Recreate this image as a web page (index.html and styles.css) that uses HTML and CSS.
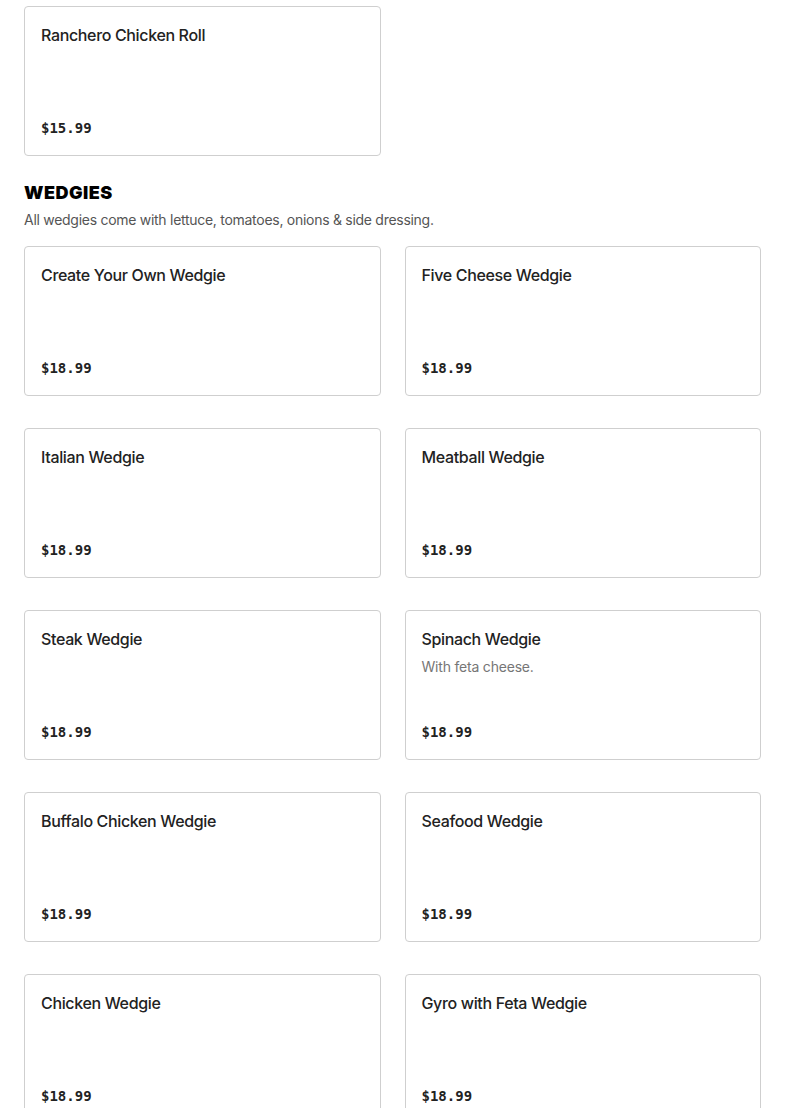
FILE: index.html
```html
<!DOCTYPE html>
<html lang="en">
<head>
<meta charset="utf-8">
<title>Menu</title>
<link rel="stylesheet" href="styles.css">
</head>
<body>
<main class="menu">
  <section class="category">
    <div class="grid">
      <article class="card">
        <h3 class="item-name">Ranchero Chicken Roll</h3>
        <div class="price">$15.99</div>
      </article>
    </div>
  </section>

  <section class="category">
    <h2 class="cat-title">WEDGIES</h2>
    <p class="cat-desc">All wedgies come with lettuce, tomatoes, onions &amp; side dressing.</p>
    <div class="grid">
      <article class="card">
        <h3 class="item-name">Create Your Own Wedgie</h3>
        <div class="price">$18.99</div>
      </article>
      <article class="card">
        <h3 class="item-name">Five Cheese Wedgie</h3>
        <div class="price">$18.99</div>
      </article>
      <article class="card">
        <h3 class="item-name">Italian Wedgie</h3>
        <div class="price">$18.99</div>
      </article>
      <article class="card">
        <h3 class="item-name">Meatball Wedgie</h3>
        <div class="price">$18.99</div>
      </article>
      <article class="card">
        <h3 class="item-name">Steak Wedgie</h3>
        <div class="price">$18.99</div>
      </article>
      <article class="card">
        <h3 class="item-name">Spinach Wedgie</h3>
        <p class="item-desc">With feta cheese.</p>
        <div class="price">$18.99</div>
      </article>
      <article class="card">
        <h3 class="item-name">Buffalo Chicken Wedgie</h3>
        <div class="price">$18.99</div>
      </article>
      <article class="card">
        <h3 class="item-name">Seafood Wedgie</h3>
        <div class="price">$18.99</div>
      </article>
      <article class="card">
        <h3 class="item-name">Chicken Wedgie</h3>
        <div class="price">$18.99</div>
      </article>
      <article class="card">
        <h3 class="item-name">Gyro with Feta Wedgie</h3>
        <div class="price">$18.99</div>
      </article>
    </div>
  </section>
</main>
</body>
</html>
```

FILE: styles.css
```css
* { box-sizing: border-box; }

html, body {
  margin: 0;
  padding: 0;
  background: #ffffff;
}

body {
  font-family: Inter, "Liberation Sans", Arial, sans-serif;
  color: #222222;
}

.menu {
  padding: 6px 24px 24px;
}

.category + .category {
  margin-top: 25px;
}

.cat-title {
  margin: 0;
  font-size: 18px;
  line-height: 24px;
  font-weight: 900;
  color: #000000;
  letter-spacing: 0.5px;
}

.cat-desc {
  margin: 5px 0 16px;
  font-size: 14px;
  line-height: 20px;
  color: #555555;
  letter-spacing: -0.28px;
}

.grid {
  display: grid;
  grid-template-columns: 1fr 1fr;
  column-gap: 24px;
  row-gap: 32px;
}

.card {
  display: flex;
  flex-direction: column;
  height: 150px;
  padding: 16px;
  border: 1px solid #cfcfcf;
  border-radius: 4px;
  background: #ffffff;
}

.item-name {
  margin: 0;
  font-size: 16px;
  line-height: 24px;
  font-weight: 500;
  color: #222222;
  letter-spacing: -0.35px;
}

.item-desc {
  margin: 6px 0 0;
  font-size: 14px;
  line-height: 20px;
  color: #767676;
  letter-spacing: -0.2px;
}

.price {
  margin-top: auto;
  margin-bottom: 1px;
  font-family: "DejaVu Sans Mono", "Liberation Mono", monospace;
  font-size: 14px;
  line-height: 20px;
  font-weight: 700;
  color: #222222;
}
```
